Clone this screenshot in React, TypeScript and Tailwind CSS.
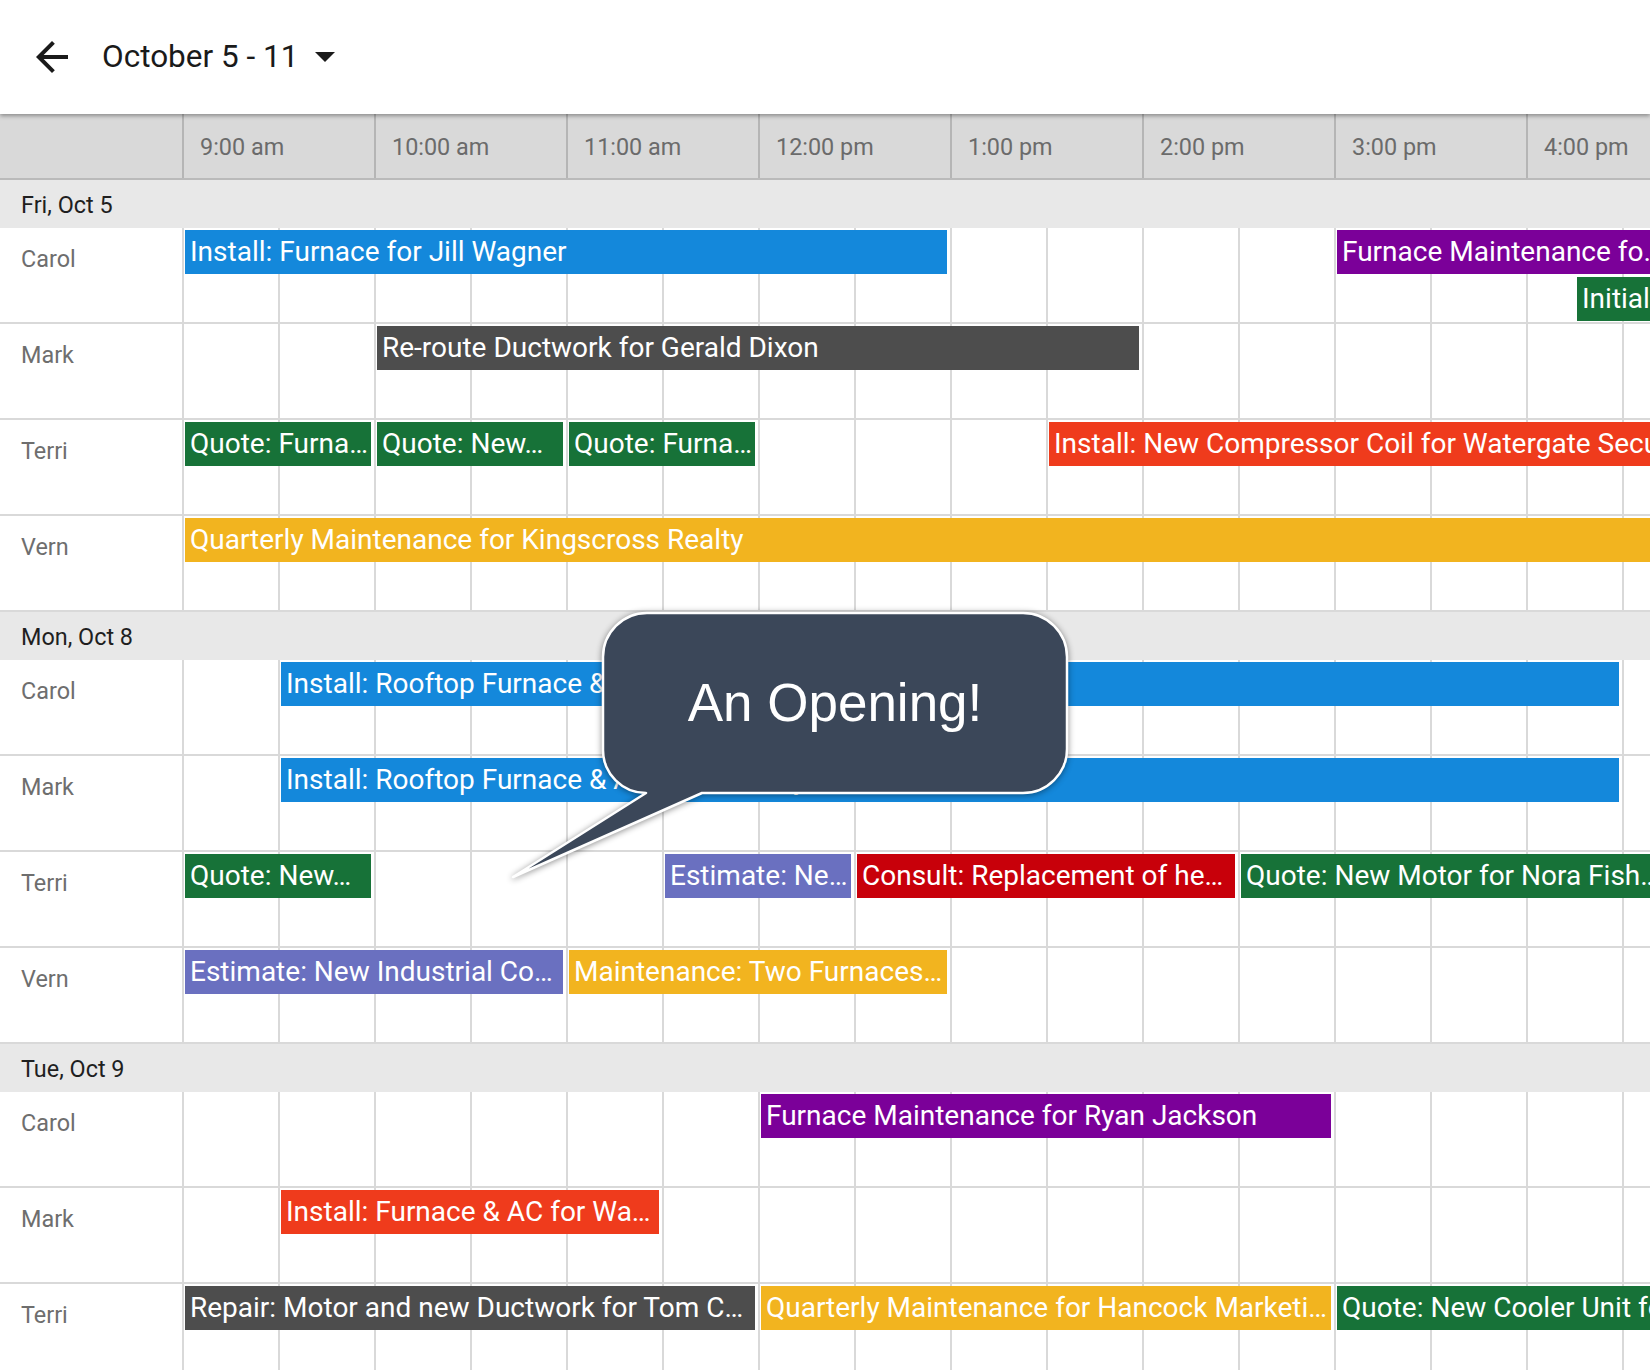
import clsx from "clsx";

type Ev = {
  title: string;
  color: string;
  start: number; // quarter hours from 9:00 am
  end?: number; // undefined = runs past the right edge
  row?: number;
  cut?: boolean; // text clipped instead of ellipsis
  far?: boolean; // bar runs a bit further past the edge
};

type Resource = { name: string; events: Ev[] };
type Day = { label: string; rows: Resource[] };

const BLUE = "bg-[#1488db]";
const PURPLE = "bg-[#7b0099]";
const GREEN = "bg-[#177238]";
const GRAY = "bg-[#4d4d4d]";
const ORANGE = "bg-[#ef3b1c]";
const YELLOW = "bg-[#f2b41f]";
const INDIGO = "bg-[#6a70c0]";
const RED = "bg-[#c8000a]";

const hours = ["9:00 am", "10:00 am", "11:00 am", "12:00 pm", "1:00 pm", "2:00 pm", "3:00 pm", "4:00 pm"];

const days: Day[] = [
  {
    label: "Fri, Oct 5",
    rows: [
      {
        name: "Carol",
        events: [
          { title: "Install: Furnace for Jill Wagner", color: BLUE, start: 0, end: 16 },
          { title: "Furnace Maintenance for Amy Nguyen", color: PURPLE, start: 24, far: true },
          { title: "Initial Consultation for Ben Ortiz", color: GREEN, start: 29, row: 2, cut: true },
        ],
      },
      {
        name: "Mark",
        events: [{ title: "Re-route Ductwork for Gerald Dixon", color: GRAY, start: 4, end: 20 }],
      },
      {
        name: "Terri",
        events: [
          { title: "Quote: Furnace for Lisa Park", color: GREEN, start: 0, end: 4 },
          { title: "Quote: New…", color: GREEN, start: 4, end: 8 },
          { title: "Quote: Furnace for Dale Moss", color: GREEN, start: 8, end: 12 },
          { title: "Install: New Compressor Coil for Watergate Security", color: ORANGE, start: 18, cut: true },
        ],
      },
      {
        name: "Vern",
        events: [{ title: "Quarterly Maintenance for Kingscross Realty", color: YELLOW, start: 0, cut: true }],
      },
    ],
  },
  {
    label: "Mon, Oct 8",
    rows: [
      {
        name: "Carol",
        events: [{ title: "Install: Rooftop Furnace & AC for Gateway Plaza", color: BLUE, start: 2, end: 30 }],
      },
      {
        name: "Mark",
        events: [{ title: "Install: Rooftop Furnace & AC for Gateway Plaza", color: BLUE, start: 2, end: 30 }],
      },
      {
        name: "Terri",
        events: [
          { title: "Quote: New…", color: GREEN, start: 0, end: 4 },
          { title: "Estimate: New Ductwork", color: INDIGO, start: 10, end: 14 },
          { title: "Consult: Replacement of heat exchanger", color: RED, start: 14, end: 22 },
          { title: "Quote: New Motor for Nora Fisher", color: GREEN, start: 22 },
        ],
      },
      {
        name: "Vern",
        events: [
          { title: "Estimate: New Industrial Cooler for Acme", color: INDIGO, start: 0, end: 8 },
          { title: "Maintenance: Two Furnaces for Grove Church", color: YELLOW, start: 8, end: 16 },
        ],
      },
    ],
  },
  {
    label: "Tue, Oct 9",
    rows: [
      {
        name: "Carol",
        events: [{ title: "Furnace Maintenance for Ryan Jackson", color: PURPLE, start: 12, end: 24 }],
      },
      {
        name: "Mark",
        events: [{ title: "Install: Furnace & AC for Wayne Ellis", color: ORANGE, start: 2, end: 10 }],
      },
      {
        name: "Terri",
        events: [
          { title: "Repair: Motor and new Ductwork for Tom Collins", color: GRAY, start: 0, end: 12 },
          { title: "Quarterly Maintenance for Hancock Marketing Group", color: YELLOW, start: 12, end: 24 },
          { title: "Quote: New Cooler Unit for Donna Reyes", color: GREEN, start: 24, cut: true },
        ],
      },
    ],
  },
];

function EventBar({ ev }: { ev: Ev }) {
  const edge = ev.end === undefined;
  return (
    <div
      className={clsx(
        "ml-[3px] h-[44px] whitespace-nowrap pl-[5px] text-[28px] leading-[43px] text-white",
        edge ? (ev.far ? "-mr-[20px]" : "-mr-[12px]") : "mr-[3px]",
        ev.cut ? "overflow-visible" : "overflow-hidden text-ellipsis",
        ev.color,
      )}
      style={{ gridColumn: `${ev.start + 1} / ${edge ? -1 : ev.end! + 1}`, gridRow: ev.row ?? 1 }}
    >
      {ev.title}
    </div>
  );
}

function ResourceRow({ res }: { res: Resource }) {
  return (
    <div className="flex h-[96px] border-b-2 border-[#d9d9d9]">
      <div className="w-[182px] shrink-0 pl-[21px] pt-[17px] text-[23.4px] leading-[28px] text-[#6e6e6e]">
        {res.name}
      </div>
      <div className="grid h-full w-[1468px] shrink-0 auto-rows-[44px] grid-cols-[repeat(30,48px)_28px] content-start gap-y-[3px] bg-[linear-gradient(to_right,#d9d9d9_2px,transparent_2px)] bg-size-[96px_100%] bg-[length:96px_100%] pt-[2px]">
        {res.events.map((ev, i) => (
          <EventBar key={i} ev={ev} />
        ))}
      </div>
    </div>
  );
}

function SpeechBubble() {
  return (
    <div className="absolute left-[500px] top-[600px] h-[300px] w-[590px]">
      <svg width="590" height="300" viewBox="0 0 590 300" className="drop-shadow-[0_1px_3px_rgba(0,0,0,0.45)]">
        <path
          d="M147 13 H523 A44 44 0 0 1 567 57 V149 A44 44 0 0 1 523 193 H202 L13 277 L146 193 A43 43 0 0 1 103 150 V57 A44 44 0 0 1 147 13 Z"
          fill="#3b4759"
          stroke="#ffffff"
          strokeWidth="2.5"
          strokeLinejoin="round"
        />
      </svg>
      <div className="absolute left-[103px] top-[13px] flex h-[180px] w-[464px] items-center justify-center font-['Liberation_Sans',Arial,sans-serif] text-[53px] text-white">
        An Opening!
      </div>
    </div>
  );
}

export default function App() {
  return (
    <div className="relative h-[1370px] w-[1650px] overflow-hidden bg-white font-[Roboto,sans-serif]">
      <header className="relative z-10 flex h-[114px] items-center bg-white pl-[28px] shadow-[0_2px_4px_rgba(0,0,0,0.35)]">
        <svg viewBox="0 0 24 24" className="h-12 w-12" fill="#1a1a1a" aria-hidden>
          <path d="M20 11H7.83l5.59-5.59L12 4l-8 8 8 8 1.41-1.41L7.83 13H20v-2z" />
        </svg>
        <h1 className="ml-[26px] text-[31.5px] font-normal text-[#1a1a1a]">October 5 - 11</h1>
        <svg viewBox="0 0 20 10" className="ml-[17px] h-[10px] w-[20px]" fill="#1a1a1a" aria-hidden>
          <path d="M0 0 L20 0 L10 10 Z" />
        </svg>
      </header>

      <div className="flex h-[66px] border-b-2 border-[#bababa] bg-[#d9d9d9]">
        <div className="w-[182px] shrink-0" />
        {hours.map((h) => (
          <div
            key={h}
            className="flex w-[192px] shrink-0 items-center border-l-2 border-[#b5b5b5] pl-[16px] pt-[4px] text-[23.4px] text-[#6b6b6b]"
          >
            {h}
          </div>
        ))}
      </div>

      {days.map((day) => (
        <section key={day.label}>
          <div className="flex h-[48px] items-center bg-[#e8e8e8] pl-[21px] pt-[4px] text-[23.4px] text-[#1f1f1f]">
            {day.label}
          </div>
          {day.rows.map((res) => (
            <ResourceRow key={res.name} res={res} />
          ))}
        </section>
      ))}

      <SpeechBubble />
    </div>
  );
}
